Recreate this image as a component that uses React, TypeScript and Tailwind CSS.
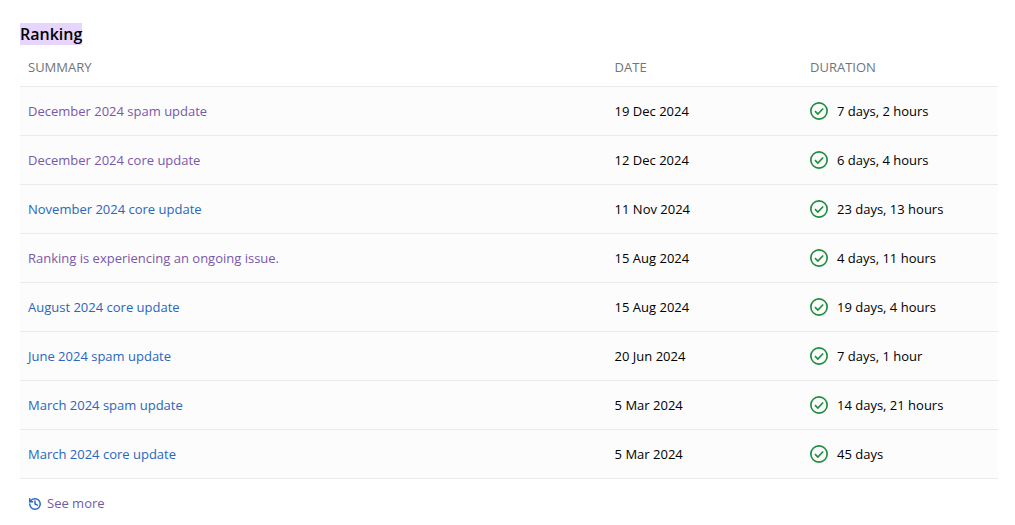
import { History } from "lucide-react";

const rows = [
  { summary: "December 2024 spam update", date: "19 Dec 2024", duration: "7 days, 2 hours", visited: true },
  { summary: "December 2024 core update", date: "12 Dec 2024", duration: "6 days, 4 hours", visited: true },
  { summary: "November 2024 core update", date: "11 Nov 2024", duration: "23 days, 13 hours", visited: false },
  { summary: "Ranking is experiencing an ongoing issue.", date: "15 Aug 2024", duration: "4 days, 11 hours", visited: true },
  { summary: "August 2024 core update", date: "15 Aug 2024", duration: "19 days, 4 hours", visited: false },
  { summary: "June 2024 spam update", date: "20 Jun 2024", duration: "7 days, 1 hour", visited: false },
  { summary: "March 2024 spam update", date: "5 Mar 2024", duration: "14 days, 21 hours", visited: false },
  { summary: "March 2024 core update", date: "5 Mar 2024", duration: "45 days", visited: false },
];

function CheckIcon() {
  return (
    <svg viewBox="0 0 24 24" className="-ml-[1px] -mt-[2px] h-5 w-5 text-[#1e8e3e]" fill="none" stroke="currentColor" strokeWidth="2">
      <circle cx="12" cy="12" r="9.8" />
      <path d="M7.2 12.2l3.4 3.4 6.4-6.6" />
    </svg>
  );
}

export default function App() {
  return (
    <div className="h-[525px] w-[1015px] overflow-hidden bg-white pl-5 pr-[17px] pt-[23px] font-['Open_Sans','Noto_Sans',sans-serif] text-[13px] text-black">
      <h2 className="h-[22px] text-base leading-[22px] font-semibold">
        <span className="inline-block bg-[#e8d5fd]">Ranking</span>
      </h2>

      <div className="grid h-[42px] grid-cols-[586.6px_195.4px_1fr] items-center pt-1 pl-2 text-[#70757a] border-b border-[#ebebeb]">
        <div>SUMMARY</div>
        <div>DATE</div>
        <div>DURATION</div>
      </div>

      {rows.map((row) => (
        <div
          key={row.summary}
          className="grid h-[49px] grid-cols-[586.6px_195.4px_1fr] items-center border-b border-[#ebebeb] bg-[#fcfcfc] pl-2 pt-[2px]"
        >
          <a className={row.visited ? "text-[#7b57a8]" : "text-[#2a66bd]"}>{row.summary}</a>
          <div>{row.date}</div>
          <div className="flex items-center gap-2">
            <CheckIcon />
            <span>{row.duration}</span>
          </div>
        </div>
      ))}

      <a className="flex h-[49px] items-center gap-[5px] pl-2 text-[#6f5ba7]">
        <History className="h-[14px] w-[14px] text-[#2468c8]" strokeWidth={2.5} />
        <span>See more</span>
      </a>
    </div>
  );
}
